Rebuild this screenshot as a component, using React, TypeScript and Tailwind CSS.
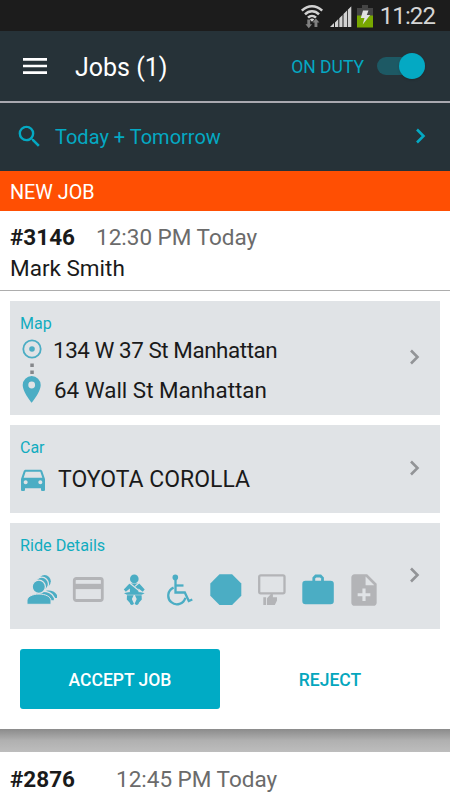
import React from 'react';
import { MdDirectionsCar, MdMenu, MdNoteAdd, MdSearch } from 'react-icons/md';

interface ChevronProps {
  className?: string;
}

const Chevron: React.FC<ChevronProps> = ({ className }) => (
  <svg width="12" height="16" viewBox="0 0 12 16" fill="none" stroke="currentColor" strokeWidth="2.6" className={className}>
    <path d="M2 1.5 8.5 8 2 14.5" />
  </svg>
);

const StatusBar: React.FC = () => (
  <div className="flex h-[31px] shrink-0 items-center justify-end bg-[#1c1c1c] pr-[15px]">
    <svg width="24" height="25" viewBox="0 0 24 25" fill="none" className="mr-[6px] mt-[2px]">
      <g stroke="#d2d2d2" strokeWidth="2.5">
        <path d="M1.8 6.7C8 .8 16 .8 22.2 6.7" />
        <path d="M5 10.3C9 6.3 15 6.3 19 10.3" />
        <path d="M8 13.7c2.3-2.3 5.7-2.3 8 0" />
      </g>
      <path d="M9.8 15.5c1.5-1.2 3.2-1.2 4.5 0L12 17.7z" fill="#d2d2d2" />
      <path d="M7.3 15.5h2.9v4.7h1.9l-3.3 4-3.3-4h1.8zM14.5 23v-4.5h-2l3.4-3.9 3.5 3.9h-2V23z" fill="#808080" />
    </svg>
    <svg width="22" height="22" viewBox="0 0 22 22" fill="#d2d2d2" className="mr-[5px] mt-[3px]">
      <path d="M0 21 4 17v4zM5 16.4l3.3-3.3V21H5zM9.3 12.2l3.2-3.2v12H9.3zM13.5 8 17 4.5V21h-3.5zM17.8 3.7 21.3.2V21h-3.5z" />
    </svg>
    <svg width="16" height="23" viewBox="0 0 16 23" className="mr-[7px] mt-[2px]">
      <path d="M5 0h6v3h5v9H0V3h5z" fill="#454545" />
      <path d="M0 10.5h16v12H0z" fill="#78a800" />
      <path d="M6 5.5h5.5L9.8 10h3.4l-7.5 9.5 1.8-6.4H3.8z" fill="#e1e1e1" />
    </svg>
    <span className="mt-[2px] text-[24px] leading-[31px] tracking-[-0.9px] text-[#d5d5d5]">11:22</span>
  </div>
);

const Passengers: React.FC = () => (
  <svg width="46" height="32" viewBox="0 0 46 32" fill="#4badc4">
    <circle cx="25.6" cy="7.3" r="6.2" />
    <path d="M21 22c1-6 13-8 17-1v3H22z" />
    <circle cx="22.7" cy="10" r="6.8" stroke="#e0e3e6" strokeWidth="1.3" />
    <path d="M13 25c0-9 19-11 22.5-1v3H13z" stroke="#e0e3e6" strokeWidth="1.3" />
    <circle cx="19.8" cy="12.8" r="6.6" stroke="#e0e3e6" strokeWidth="1.3" />
    <path d="M8 30.3v-3.5c0-9 24-9 24 0v3.5z" stroke="#e0e3e6" />
  </svg>
);

const Card: React.FC = () => (
  <svg width="46" height="32" viewBox="0 0 46 32">
    <rect x="9.3" y="4.5" width="28" height="22" rx="2" fill="none" stroke="#b3b4b7" strokeWidth="2.8" />
    <path d="M9.3 9.8h28v5.3h-28z" fill="#b3b4b7" />
  </svg>
);

const BabySeat: React.FC = () => (
  <svg width="46" height="32" viewBox="0 0 46 32" fill="#4badc4">
    <circle cx="23.3" cy="4.9" r="4.3" />
    <path d="M18.5 9.5h9.8l5.4 6-2 2.2-4.2-3.2v3.7h-8.6v-3.7l-4.1 3.2-2-2.2z" />
    <path d="m18 8.5 13.5 11M28.5 8.5 24 12.4" stroke="#e0e3e6" strokeWidth="1.1" />
    <path d="M13 19.2c3-1.7 17.6-1.7 20.6 0l-3 1.6H16z" />
    <path d="M16 21.3h6.7l-1.8 3.6 1.2 3.1-2.3 2-4-4.5zM30.6 21.3h-6.7l1.8 3.6-1.2 3.1 2.3 2 4-4.5z" />
    <circle cx="20.9" cy="29.2" r="1.8" />
    <circle cx="25.7" cy="29.2" r="1.8" />
  </svg>
);

const Wheelchair: React.FC = () => (
  <svg width="46" height="32" viewBox="0 0 46 32" fill="none" stroke="#4badc4" strokeWidth="2.3">
    <circle cx="18.3" cy="3.4" r="2.8" fill="#4badc4" stroke="none" />
    <path d="M18.5 5v13.5h9.3l4 8.5 3.5-1.5" />
    <path d="M18.5 11.5h8" />
    <path d="M16.6 13.6a8.7 8.7 0 1 0 11.8 10.2" />
  </svg>
);

const Octagon: React.FC = () => (
  <svg width="46" height="32" viewBox="0 0 46 32" fill="#4badc4">
    <path d="M16.5.3h12.6l9.2 9.2v12.3l-9.2 9.2H16.5l-9.2-9.2V9.5z" />
  </svg>
);

const MeetSign: React.FC = () => (
  <svg width="46" height="32" viewBox="0 0 46 32" fill="#b3b4b7">
    <rect x="10.2" y="1.3" width="25.3" height="18" rx="1.5" fill="none" stroke="#b3b4b7" strokeWidth="2.3" />
    <path d="M21.8 20h2v4h-2z" />
    <path d="M14.3 23.3h2.8V31h-2.8zM18 24.2l4-4.2c1.5 0 2 1.4 1.3 3.3H28v3.2L25.8 31H18z" />
  </svg>
);

const Luggage: React.FC = () => (
  <svg width="46" height="32" viewBox="0 0 46 32" fill="#4badc4">
    <path d="M18.8 7V4l2-2h4.7l2 2v3" fill="none" stroke="#4badc4" strokeWidth="2.8" />
    <rect x="7.3" y="6.8" width="31.5" height="23.4" rx="3.2" />
  </svg>
);

const rideOptions = [Passengers, Card, BabySeat, Wheelchair, Octagon, MeetSign, Luggage];

export default function App() {
  return (
    <div className="flex h-[800px] w-[450px] flex-col overflow-hidden bg-white font-['Roboto',sans-serif] text-[#1a1a1a]">
      <StatusBar />

      {/* Header */}
      <header className="flex h-[70px] shrink-0 items-center bg-[#263238] pl-[19px] pr-[25px] text-white">
        <MdMenu className="size-8" />
        <h1 className="ml-6 mt-[4px] text-[25px] leading-8">Jobs (1)</h1>
        <span className="ml-auto mt-[2px] text-[17.5px] leading-6 text-[#04a9c3]">ON DUTY</span>
        <div className="ml-[13px] flex h-[18px] w-12 items-center justify-end rounded-full bg-[#1d5964]">
          <div className="size-[26px] shrink-0 rounded-full bg-[#04a9c3] shadow" />
        </div>
      </header>
      <div className="h-[2px] shrink-0 bg-[#a9a9b0]" />

      {/* Date filter */}
      <div className="flex h-[68px] shrink-0 items-center bg-[#263238] pb-[2px] pl-[15px] pr-[23px] text-[#04a9c3]">
        <MdSearch className="size-[29px]" />
        <span className="ml-[11px] mt-[2px] text-[20px] leading-6">Today + Tomorrow</span>
        <Chevron className="ml-auto" />
      </div>

      <div className="flex h-10 shrink-0 items-center bg-[#ff4f03] pl-[10px] text-[19.8px] text-white">
        <span className="mt-[3px]">NEW JOB</span>
      </div>

      {/* Customer */}
      <div className="h-20 shrink-0 border-b border-[#adadad] px-[10px] pt-[11px] text-[22.5px]">
        <div className="flex h-[31px] items-center">
          <span className="w-[86px] font-bold">#3146</span>
          <span className="text-[#6b6b6b]">12:30 PM Today</span>
        </div>
        <div className="flex h-[31px] items-center">Mark Smith</div>
      </div>

      {/* Job details */}
      <main className="flex shrink-0 flex-col gap-[10px] px-[10px] pt-[10px]">
        <section className="flex h-[114px] justify-between bg-[#e0e3e6] pl-[10px] pr-[19px] pt-3">
          <div>
            <h2 className="text-[16px] leading-[22px] text-[#11acbf]">Map</h2>
            <div className="-mt-[1px] flex">
              <svg width="24" height="72" viewBox="0 0 24 72" className="mr-[10px]">
                <circle cx="12" cy="15" r="8.7" fill="none" stroke="#4badc4" strokeWidth="1.8" />
                <circle cx="12" cy="15" r="2.8" fill="#4badc4" />
                <path d="M10.3 29.5h3.5V33h-3.5zM10.3 36.5h3.5V40h-3.5z" fill="#85878b" />
                <path
                  d="M11.7 42a9 9 0 0 0-9 9c0 7 9 17.8 9 17.8s9-10.8 9-17.8a9 9 0 0 0-9-9zm0 12.4a3.4 3.4 0 1 1 0-6.8 3.4 3.4 0 0 1 0 6.8z"
                  fill="#4badc4"
                />
              </svg>
              <div className="-mt-[4px] text-[22.4px] leading-10">
                <div className="-ml-[1px] tracking-[-0.44px]">134 W 37 St Manhattan</div>
                <div>64 Wall St Manhattan</div>
              </div>
            </div>
          </div>
          <Chevron className="mt-9 text-[#929497]" />
        </section>

        <section className="flex h-[88px] justify-between bg-[#e0e3e6] pl-[10px] pr-[19px] pt-3">
          <div>
            <h2 className="text-[16px] leading-[22px] text-[#11acbf]">Car</h2>
            <div className="mt-[3px] flex items-center">
              <MdDirectionsCar className="-ml-[3px] -mt-[2px] size-8 text-[#4badc4]" />
              <span className="ml-[9px] text-[23px] leading-9">TOYOTA COROLLA</span>
            </div>
          </div>
          <Chevron className="mt-[23px] text-[#929497]" />
        </section>

        <section className="flex h-[106px] justify-between bg-[#e0e3e6] pl-[10px] pr-[19px] pt-3">
          <div>
            <h2 className="text-[16.2px] leading-[22px] text-[#11acbf]">Ride Details</h2>
            <div className="-ml-[1px] mt-[17px] flex">
              {rideOptions.map((Icon, i) => (
                <Icon key={i} />
              ))}
              <div className="flex h-8 w-[46px] items-center justify-center">
                <MdNoteAdd className="size-[38px] shrink-0 text-[#b3b4b7]" />
              </div>
            </div>
          </div>
          <Chevron className="-ml-2 mt-8 shrink-0 text-[#929497]" />
        </section>
      </main>

      {/* Actions */}
      <div className="flex h-[100px] shrink-0 px-5 pt-5 text-[17.5px] font-medium">
        <button className="h-[60px] w-[200px] shrink-0 rounded-[3px] bg-[#00abc5] pt-[2px] text-white">ACCEPT JOB</button>
        <button className="h-[60px] w-[220px] shrink-0 pt-[2px] text-[#04a6bd]">REJECT</button>
      </div>

      <div className="h-[23px] shrink-0 bg-linear-to-b from-[#8b8b8b] via-[#b0b0b0] to-[#bdbdbd]" />

      {/* Next job */}
      <div className="flex h-12 shrink-0 items-center px-[10px] pt-[7px] text-[22.5px]">
        <span className="w-[106px] font-bold">#2876</span>
        <span className="text-[#6b6b6b]">12:45 PM Today</span>
      </div>
    </div>
  );
}
